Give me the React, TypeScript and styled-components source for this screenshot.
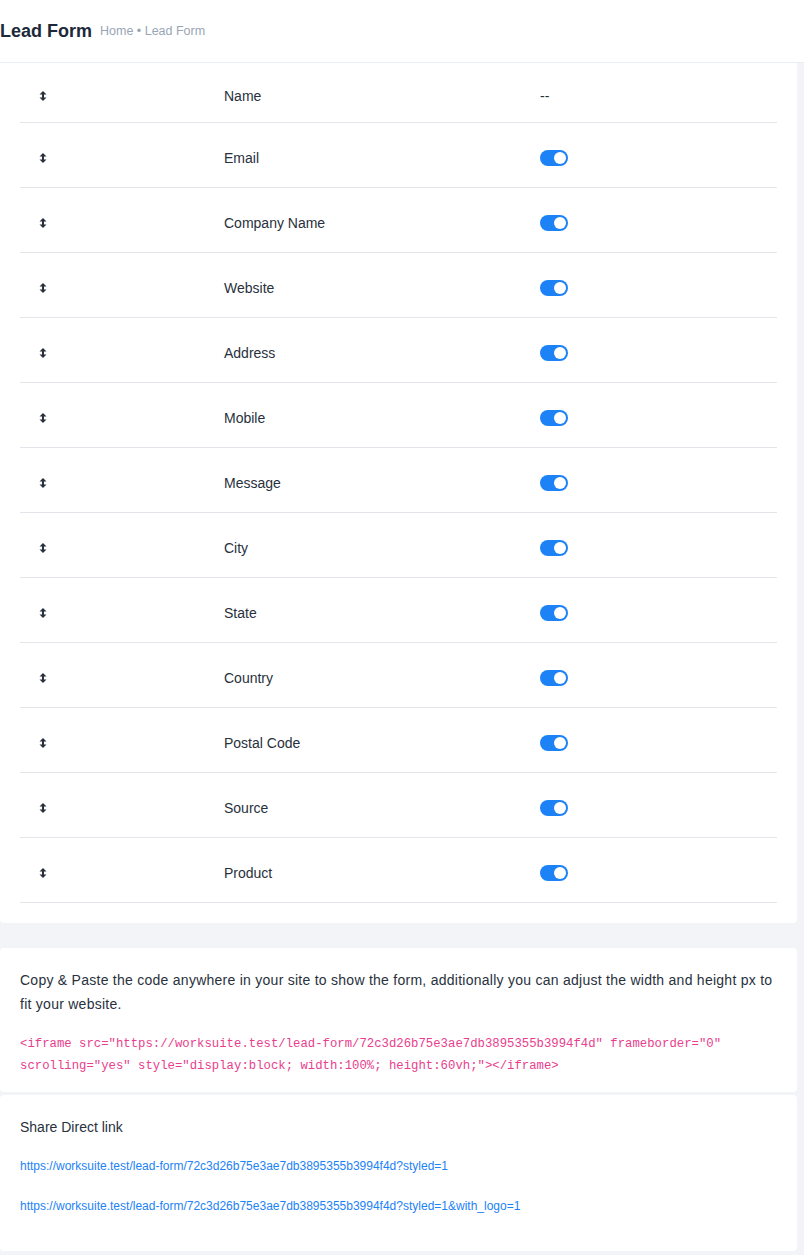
import React from 'react';
import styled, { createGlobalStyle } from 'styled-components';

const GlobalStyle = createGlobalStyle`
  body {
    margin: 0;
    background: #f2f4f7;
    font-family: 'Liberation Sans', Arial, sans-serif;
    color: #28313c;
  }
`;

const fields = [
  'Email',
  'Company Name',
  'Website',
  'Address',
  'Mobile',
  'Message',
  'City',
  'State',
  'Country',
  'Postal Code',
  'Source',
  'Product',
];

const formId = '72c3d26b75e3ae7db3895355b3994f4d';

const App = () => {
  return (
    <>
      <GlobalStyle />
      <Header>
        <Title>Lead Form</Title>
        <Crumbs>Home • Lead Form</Crumbs>
      </Header>
      <Page>
        <TableCard>
          <Table>
            <Row $first>
              <HandleCell>
                <SortIcon />
              </HandleCell>
              <LabelCell>Name</LabelCell>
              <StatusCell>--</StatusCell>
            </Row>
            {fields.map((f) => (
              <Row key={f}>
                <HandleCell>
                  <SortIcon />
                </HandleCell>
                <LabelCell>{f}</LabelCell>
                <StatusCell>
                  <Toggle />
                </StatusCell>
              </Row>
            ))}
          </Table>
        </TableCard>

        <InfoCard>
          <Note>
            Copy &amp; Paste the code anywhere in your site to show the form, additionally you can adjust the width and
            height px to fit your website.
          </Note>
          <Code>
            {`<iframe src="https://worksuite.test/lead-form/${formId}" frameborder="0" scrolling="yes" style="display:block; width:100%; height:60vh;"></iframe>`}
          </Code>
        </InfoCard>

        <ShareCard>
          <ShareTitle>Share Direct link</ShareTitle>
          <ShareLink href='#'>{`https://worksuite.test/lead-form/${formId}?styled=1`}</ShareLink>
          <ShareLink href='#'>{`https://worksuite.test/lead-form/${formId}?styled=1&with_logo=1`}</ShareLink>
        </ShareCard>
      </Page>
    </>
  );
};

export default App;

const SortIcon = () => (
  <svg width='8' height='10' viewBox='0 0 8 10'>
    <path d='M4 0 L7.5 3.4 L0.5 3.4 Z' fill='#28313c' />
    <path d='M4 10 L7.5 6.6 L0.5 6.6 Z' fill='#28313c' />
    <rect x='3' y='3' width='2' height='4' fill='#28313c' />
  </svg>
);

const Header = styled.div`
  display: flex;
  align-items: center;
  gap: 8px;
  height: 63px;
  box-sizing: border-box;
  padding-top: 1px;
  background: #fff;
  border-bottom: 1px solid #e8eef3;
`;

const Title = styled.h1`
  margin: 0;
  font-size: 18px;
  font-weight: 700;
  color: #1d2939;
`;

const Crumbs = styled.span`
  font-size: 12.5px;
  color: #99a5b5;
  margin-top: -2px;
`;

const Page = styled.div`
  padding-right: 7px;
`;

const Card = styled.div`
  background: #fff;
  border-radius: 4px;
`;

const TableCard = styled(Card)`
  border-radius: 0 0 4px 4px;
  padding: 0 20px 20px;
`;

const Table = styled.div`
  display: flex;
  flex-direction: column;
`;

const Row = styled.div<{ $first?: boolean }>`
  display: grid;
  grid-template-columns: 190px 330px 1fr;
  align-items: center;
  height: ${(p) => (p.$first ? '60px' : '65px')};
  padding-top: ${(p) => (p.$first ? '7px' : '6px')};
  box-sizing: border-box;
  border-bottom: 1px solid #e3e5ea;
  font-size: 14px;
  color: #28313c;
`;

const HandleCell = styled.div`
  display: flex;
  padding-left: 19px;
`;

const LabelCell = styled.div`
  padding-left: 14px;
`;

const StatusCell = styled.div`
  display: flex;
  align-items: center;
`;

const Toggle = styled.span`
  position: relative;
  display: inline-block;
  width: 28px;
  height: 16px;
  border-radius: 8px;
  background: #1d82f5;
  &::after {
    content: '';
    position: absolute;
    top: 2px;
    right: 2px;
    width: 12px;
    height: 12px;
    border-radius: 50%;
    background: #fff;
  }
`;

const InfoCard = styled(Card)`
  margin-top: 25px;
  padding: 20px 20px 15px;
`;

const Note = styled.p`
  margin: 0;
  font-size: 14px;
  letter-spacing: 0.26px;
  line-height: 24px;
  color: #28313c;
`;

const Code = styled.code`
  display: block;
  margin-top: 17px;
  font-family: 'Liberation Mono', 'Courier New', monospace;
  font-size: 12.3px;
  line-height: 22px;
  color: #e83e8c;
  word-break: break-word;
`;

const ShareCard = styled(Card)`
  margin-top: 3px;
  padding: 23px 20px 36px;
  display: flex;
  flex-direction: column;
  align-items: flex-start;
`;

const ShareTitle = styled.h4`
  margin: 0 0 21px;
  font-size: 14px;
  font-weight: 500;
  line-height: 18px;
  color: #28313c;
`;

const ShareLink = styled.a`
  display: block;
  font-size: 12px;
  line-height: 18px;
  margin-bottom: 22px;
  color: #1d82f5;
  text-decoration: none;
  &:last-child {
    margin-bottom: 0;
  }
`;
